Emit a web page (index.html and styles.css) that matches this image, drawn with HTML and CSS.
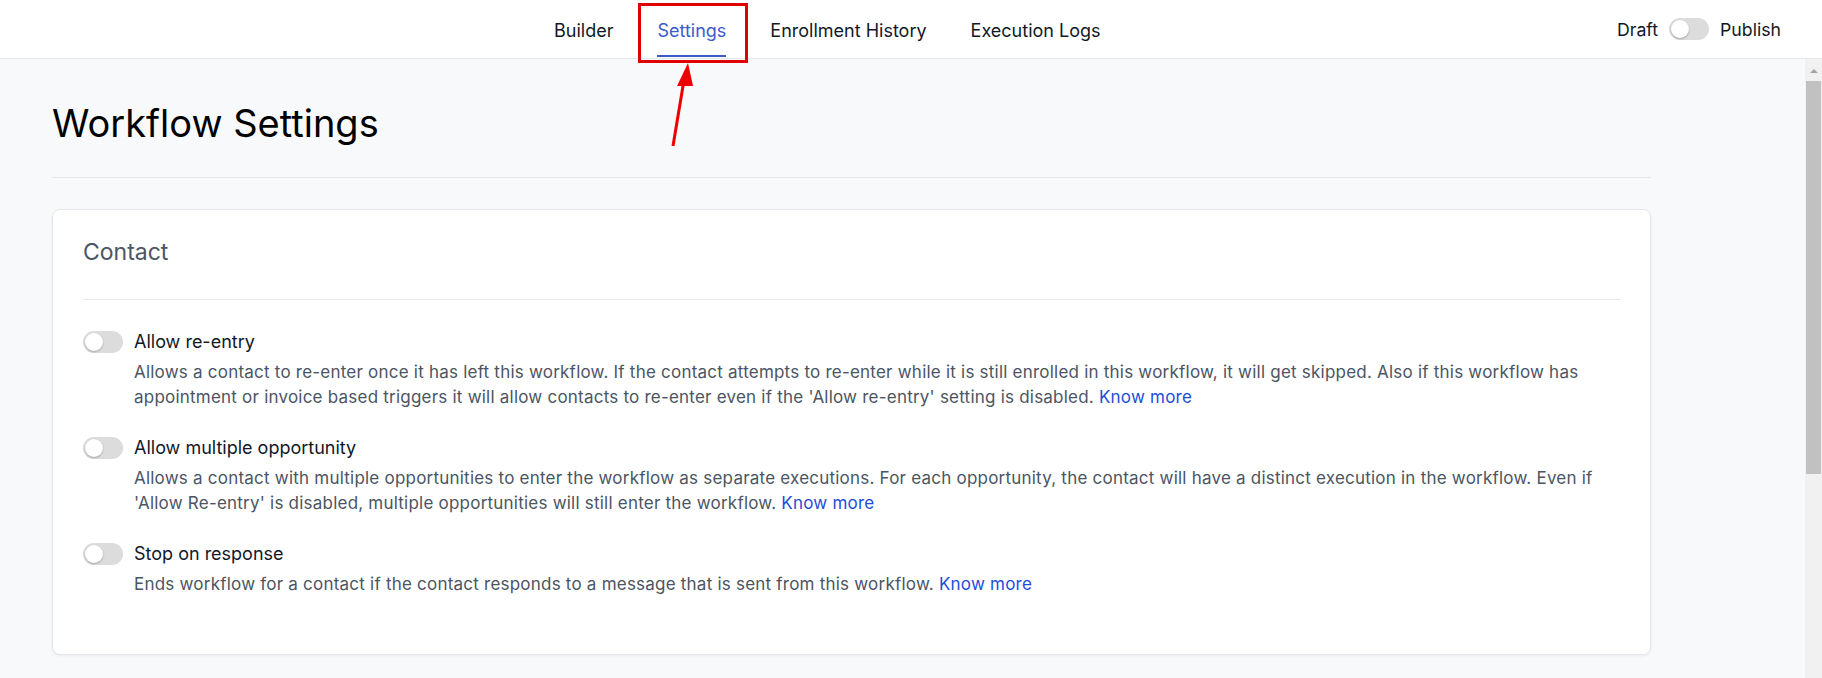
FILE: index.html
```html
<!DOCTYPE html>
<html lang="en">
<head>
    <meta charset="UTF-8">
    <meta name="viewport" content="width=device-width, initial-scale=1.0">
    <title>Workflow Settings</title>
    <link rel="stylesheet" href="styles.css">
</head>
<body>

    <header class="topbar">
        <nav class="tabs">
            <a class="tab">Builder</a>
            <a class="tab active">Settings</a>
            <a class="tab">Enrollment History</a>
            <a class="tab">Execution Logs</a>
        </nav>
        <div class="publish">
            <span>Draft</span>
            <span class="switch"></span>
            <span>Publish</span>
        </div>

        <!-- annotation over the Settings tab -->
        <div class="mark-box"></div>
        <svg class="mark-arrow" width="40" height="90" viewBox="0 0 40 90">
            <line x1="9" y1="86" x2="20" y2="20" stroke="#ee0000" stroke-width="3"/>
            <polygon points="24,3 13,26 29,26" fill="#ee0000"/>
        </svg>
    </header>

    <div class="main">
        <div class="content">
            <div class="page">
                <div class="page-head">
                    <h1>Workflow Settings</h1>
                </div>

                <section class="card">
                    <h3 class="card-title">Contact</h3>

                    <div class="options">
                        <div class="option">
                            <span class="switch"></span>
                            <div class="option-text">
                                <div class="option-label">Allow re-entry</div>
                                <p class="option-desc">Allows a contact to re-enter once it has left this workflow. If the contact attempts to re-enter while it is still enrolled in this workflow, it will get skipped. Also if this workflow has appointment or invoice based triggers it will allow contacts to re-enter even if the 'Allow re-entry' setting is disabled. <a class="more">Know more</a></p>
                            </div>
                        </div>

                        <div class="option">
                            <span class="switch"></span>
                            <div class="option-text">
                                <div class="option-label">Allow multiple opportunity</div>
                                <p class="option-desc">Allows a contact with multiple opportunities to enter the workflow as separate executions. For each opportunity, the contact will have a distinct execution in the workflow. Even if 'Allow Re-entry' is disabled, multiple opportunities will still enter the workflow. <a class="more">Know more</a></p>
                            </div>
                        </div>

                        <div class="option">
                            <span class="switch"></span>
                            <div class="option-text">
                                <div class="option-label">Stop on response</div>
                                <p class="option-desc">Ends workflow for a contact if the contact responds to a message that is sent from this workflow. <a class="more">Know more</a></p>
                            </div>
                        </div>
                    </div>
                </section>
            </div>
        </div>

        <div class="scrollbar">
            <div class="scroll-up"></div>
            <div class="scroll-thumb"></div>
        </div>
    </div>

</body>
</html>
```

FILE: styles.css
```css
/* base */
body {
    margin: 0;
    font-family: Inter, "Noto Sans", Arial, sans-serif;
    color: #111827;
    background: #f8f9fb;
    overflow: hidden;
}

/* top bar with tabs */
.topbar {
    position: relative;
    height: 58px;
    background: #ffffff;
    border-bottom: 1px solid #e5e7eb;
    display: flex;
    align-items: center;
}

.tabs {
    display: flex;
    height: 100%;
    margin-left: 532px;
}

.tab {
    display: flex;
    align-items: center;
    padding: 2px 22px 0;
    font-size: 18px;
    color: #111827;
    cursor: pointer;
}

/* blue underline under the open tab */
.tab.active {
    color: #3b5bcc;
    background-image: linear-gradient(#3b5bcc, #3b5bcc);
    background-repeat: no-repeat;
    background-size: calc(100% - 44px) 2px;
    background-position: 22px calc(100% - 1px);
}

.publish {
    margin-left: auto;
    margin-right: 41px;
    display: flex;
    align-items: center;
    gap: 11px;
    font-size: 17.7px;
    color: #111827;
}

/* toggle switch (off state) */
.switch {
    position: relative;
    display: inline-block;
    width: 40px;
    height: 22px;
    border-radius: 11px;
    background: #dcdcdc;
    flex-shrink: 0;
}

.switch::before {
    content: "";
    position: absolute;
    left: 2px;
    top: 2px;
    width: 18px;
    height: 18px;
    border-radius: 50%;
    background: #ffffff;
    box-shadow: 0 1px 2px rgba(0, 0, 0, 0.25);
}

/* red annotation */
.mark-box {
    position: absolute;
    left: 638px;
    top: 3px;
    width: 104px;
    height: 54px;
    border: 3px solid #e00000;
}

.mark-arrow {
    position: absolute;
    left: 664px;
    top: 60px;
    z-index: 5;
}

/* content area */
.main {
    display: flex;
    height: calc(100vh - 59px);
}

.content {
    flex: 1;
    overflow: hidden;
}

.page {
    width: 1599px;
    padding: 41px 0 0 52px;
}

.page-head {
    padding-bottom: 31px;
    border-bottom: 1px solid #e5e7eb;
}

h1 {
    margin: 0;
    font-size: 38px;
    line-height: 46px;
    font-weight: 400;
    color: #000000;
}

.card {
    margin-top: 31px;
    background: #ffffff;
    border: 1px solid #e5e7eb;
    border-radius: 8px;
    box-shadow: 0 1px 3px rgba(0, 0, 0, 0.06);
    padding: 0 30px 31px;
}

.card-title {
    margin: 0;
    padding: 28px 0 33px;
    font-size: 23px;
    line-height: 28px;
    font-weight: 400;
    color: #4b5563;
    border-bottom: 1px solid #e5e7eb;
}

.options {
    padding-top: 30px;
}

.option {
    display: flex;
    gap: 11px;
    margin-bottom: 26px;
}

.option .switch {
    margin-top: 1px;
}

.option-label {
    font-size: 18px;
    line-height: 24px;
    color: #111827;
}

.option-desc {
    margin: 6px 0 0;
    font-size: 17px;
    line-height: 25px;
    letter-spacing: 0.22px;
    color: #4b5563;
}

.more {
    color: #1d4ed8;
    cursor: pointer;
}

/* fake classic scrollbar */
.scrollbar {
    width: 17px;
    background: #f1f1f1;
    display: flex;
    flex-direction: column;
    align-items: center;
}

.scroll-up {
    margin-top: 10px;
    width: 0;
    height: 0;
    border-left: 4px solid transparent;
    border-right: 4px solid transparent;
    border-bottom: 4px solid #a3a3a3;
}

.scroll-thumb {
    margin-top: 8px;
    width: 15px;
    height: 393px;
    background: #c1c1c1;
}
```
